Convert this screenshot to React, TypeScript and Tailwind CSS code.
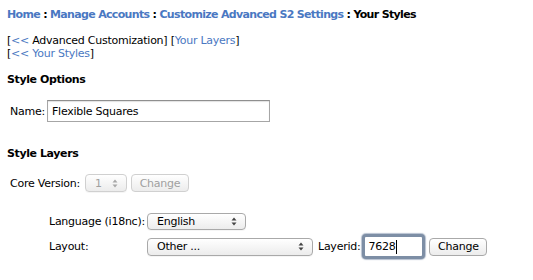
import React from 'react';

const font = { fontFamily: '"DejaVu Sans", Verdana, sans-serif' };

const Arrows: React.FC<{ muted?: boolean }> = ({ muted }) => (
  <svg width="6" height="9" viewBox="0 0 6 9" className="shrink-0">
    <path d="M0.5 3.5 L3 0.5 L5.5 3.5 Z" fill={muted ? '#a8a8a8' : '#444'} />
    <path d="M0.5 5.5 L3 8.5 L5.5 5.5 Z" fill={muted ? '#a8a8a8' : '#444'} />
  </svg>
);

const FakeSelect: React.FC<{ value: string; className: string; disabled?: boolean }> = ({ value, className, disabled }) => (
  <div
    className={`flex shrink-0 items-center justify-between rounded-[4px] border bg-gradient-to-b from-white to-[#ececec] pl-[9px] pr-[8px] text-[11px] shadow-[0_1px_0_rgba(0,0,0,0.04)] ${
      disabled ? 'border-[#d0d0d0] text-[#a0a0a0]' : 'border-[#a9a9a9] text-black'
    } ${className}`}
  >
    <span>{value}</span>
    <Arrows muted={disabled} />
  </div>
);

const FakeButton: React.FC<{ label: string; className: string; disabled?: boolean }> = ({ label, className, disabled }) => (
  <div
    className={`flex shrink-0 items-center justify-center rounded-[4px] border bg-gradient-to-b from-white to-[#ececec] text-[11px] ${
      disabled ? 'border-[#d0d0d0] text-[#a0a0a0]' : 'border-[#a9a9a9] text-black'
    } ${className}`}
  >
    {label}
  </div>
);

export default function App() {
  const link = 'text-[#4a78c2]';
  return (
    <div
      className="w-[533px] h-[280px] bg-white text-black text-[11px] leading-[13px] tracking-[-0.25px] whitespace-nowrap overflow-hidden"
      style={font}
    >
      {/* Breadcrumb */}
      <div className="pl-[7px] pt-[8px] font-bold text-[11px] leading-[13px] tracking-[-0.67px]">
        <span className={link}>Home</span> : <span className={link}>Manage Accounts</span> :{' '}
        <span className={link}>Customize Advanced S2 Settings</span> : Your Styles
      </div>

      <div className="pl-[7px] mt-[13px]">
        <div>
          [<span className={link}>&lt;&lt;</span> Advanced Customization] [<span className={link}>Your Layers</span>]
        </div>
        <div>
          [<span className={link}>&lt;&lt; Your Styles</span>]
        </div>
      </div>

      <div className="pl-[7px] mt-[13px] font-bold tracking-[-0.4px]">Style Options</div>

      <div className="flex items-center mt-[14px] pl-[10px]">
        <span className="w-[37px]">Name:</span>
        <div className="w-[223px] h-[22px] border border-[#a6a6a6] border-t-[#8f8f8f] shadow-[inset_0_1px_1px_rgba(0,0,0,0.12)] flex items-center pl-[4px]">
          Flexible Squares
        </div>
      </div>

      <div className="pl-[7px] mt-[25px] font-bold tracking-[-0.4px]">Style Layers</div>

      <div className="flex items-center mt-[14px] pl-[10px]">
        <span className="w-[75px]">Core Version:</span>
        <FakeSelect value="1" disabled className="w-[42px] h-[18px]" />
        <FakeButton label="Change" disabled className="ml-[4px] w-[58px] h-[18px]" />
      </div>

      <div className="pl-[49px] mt-[21px]">
        <div className="flex items-center">
          <span className="w-[98px]">Language (i18nc):</span>
          <FakeSelect value="English" className="w-[99px] h-[17px]" />
        </div>
        <div className="flex items-center mt-[4px]">
          <span className="w-[98px]">Layout:</span>
          <FakeSelect value="Other ..." className="w-[166px] h-[18px]" />
          <span className="ml-[5px]">Layerid:</span>
          <div className="ml-[2px] w-[63px] h-[25px] rounded-[4px] border-[3px] border-[#7d8ea5] shadow-[0_0_1px_1px_rgba(110,130,160,0.5)] flex items-center pl-[3px] bg-white">
            <span>7628</span>
            <span className="inline-block w-px h-[14px] bg-black ml-px" />
          </div>
          <FakeButton label="Change" className="ml-[4px] w-[58px] h-[18px]" />
        </div>
      </div>
    </div>
  );
}
